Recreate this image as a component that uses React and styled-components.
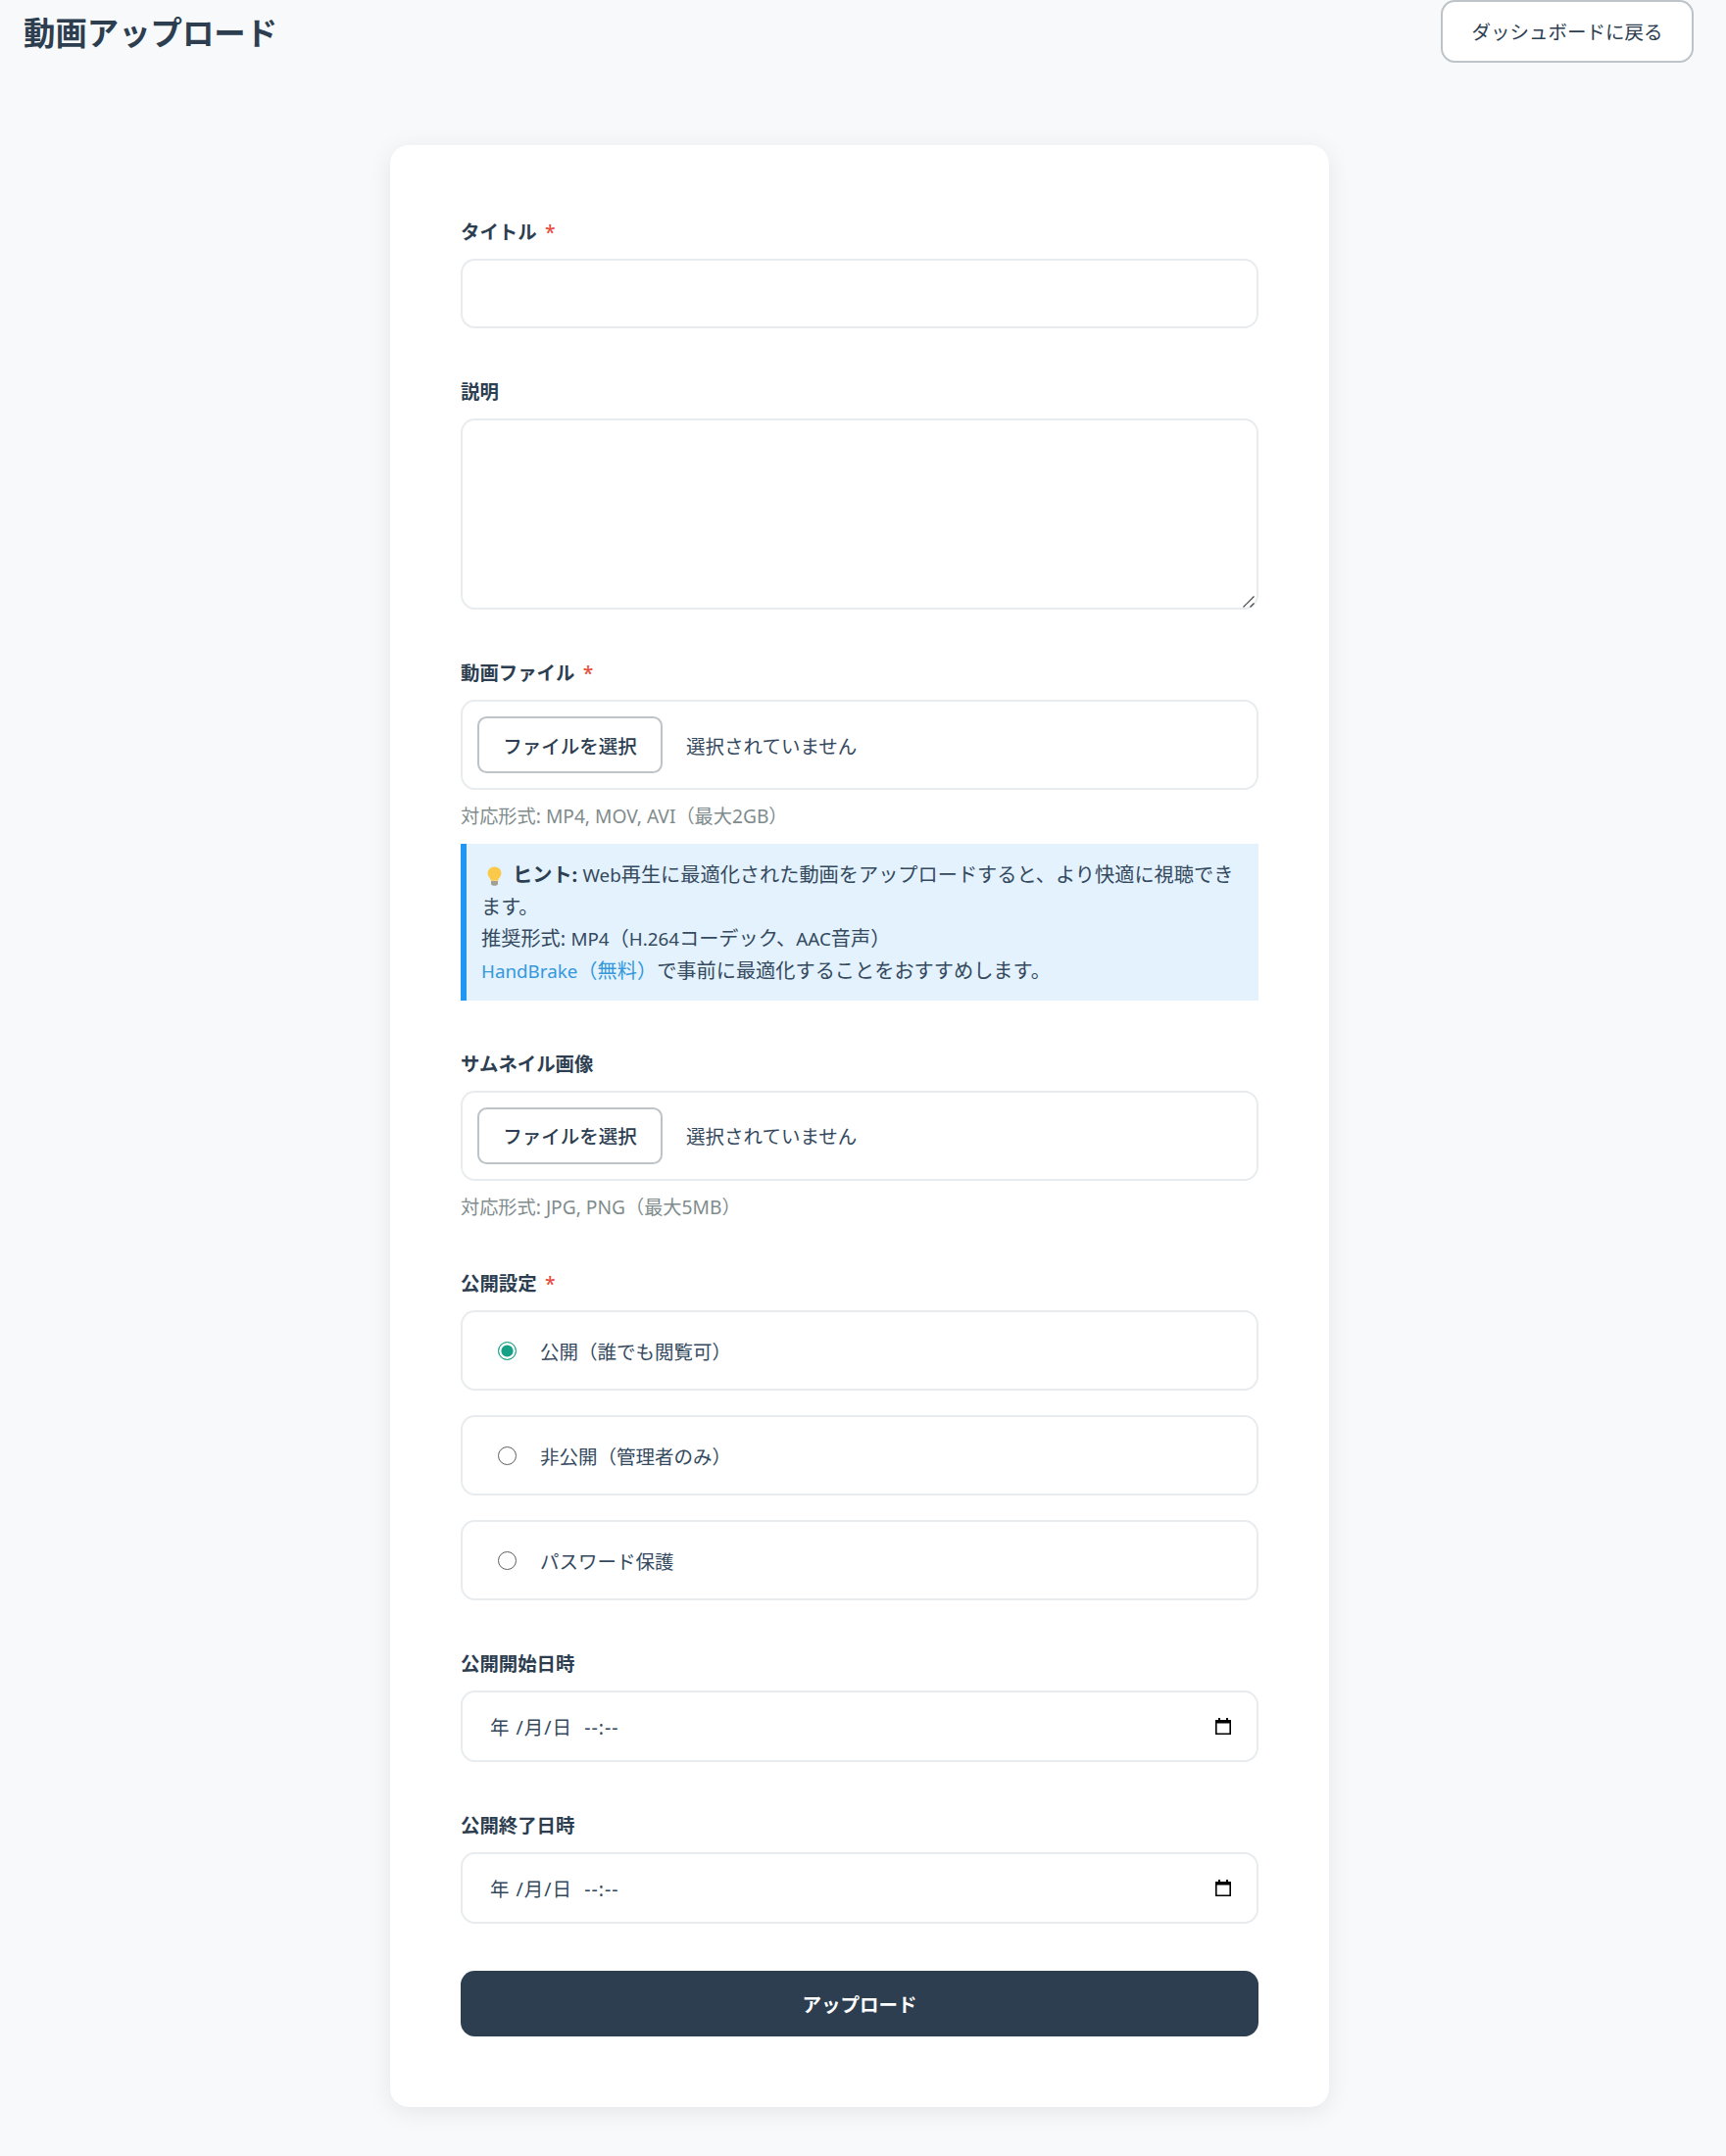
import React from "react";
import styled, { createGlobalStyle } from "styled-components";

const GlobalStyle = createGlobalStyle`
  html, body {
    margin: 0;
    padding: 0;
    background: #f8f9fa;
  }
  body {
    font-family: "Noto Sans", "Noto Sans CJK JP", sans-serif;
    color: #2c3e50;
  }
  * {
    box-sizing: border-box;
  }
`;

const Page = styled.div`
  width: 1754px;
  min-height: 2200px;
  background: #f8f9fa;
`;

const Header = styled.header`
  display: flex;
  justify-content: space-between;
  align-items: center;
  height: 63px;
  padding: 0 26px 0 24px;
  margin-bottom: 85px;
`;

const Title = styled.h1`
  margin: 3px 0 0;
  font-size: 32.4px;
  font-weight: 700;
  line-height: 1.2;
  color: #2c3e50;
`;

const BackButton = styled.a`
  display: flex;
  align-items: center;
  justify-content: center;
  width: 258px;
  height: 64px;
  background: #fff;
  border: 2.4px solid #bdc3c7;
  border-radius: 14.4px;
  font-size: 19.5px;
  color: #2c3e50;
`;

const Card = styled.form`
  width: 958px;
  margin: 0 auto;
  padding: 72px;
  background: #fff;
  border-radius: 19.2px;
  box-shadow: 0 4.8px 24px rgba(0, 0, 0, 0.08);
`;

const Field = styled.div`
  margin-bottom: 48px;
`;

const Label = styled.label`
  display: block;
  padding-top: 1px;
  margin-bottom: 11px;
  font-size: 19.4px;
  line-height: 32px;
  font-weight: 600;
  color: #2c3e50;
`;

const Required = styled.span`
  margin-left: 3.4px;
  font-weight: 500;
  color: #e74c3c;
`;

const TextInput = styled.input`
  display: block;
  width: 100%;
  height: 71px;
  padding: 0 24px;
  background: #fff;
  border: 2.4px solid #e9ecef;
  border-radius: 14.4px;
  font: inherit;
  font-size: 19.2px;
  outline: none;
`;

const TextAreaWrap = styled.div`
  position: relative;
`;

const TextArea = styled.textarea`
  display: block;
  width: 100%;
  height: 195px;
  padding: 18px 24px;
  background: #fff;
  border: 2.4px solid #e9ecef;
  border-radius: 14.4px;
  font: inherit;
  font-size: 19.2px;
  outline: none;
  resize: none;
`;

const Grip = styled.svg`
  position: absolute;
  right: 4px;
  bottom: 2px;
  width: 12px;
  height: 12px;
`;

const FileBox = styled.div`
  display: flex;
  align-items: center;
  height: 92px;
  padding: 0 15px;
  background: #fff;
  border: 2.4px solid #e9ecef;
  border-radius: 14.4px;
`;

const FileButton = styled.button`
  width: 189px;
  height: 58px;
  margin-right: 24px;
  background: #fff;
  border: 2.4px solid #bdc3c7;
  border-radius: 9.6px;
  font: inherit;
  font-size: 19.5px;
  font-weight: 500;
  color: #2c3e50;
`;

const FileName = styled.span`
  font-size: 19.5px;
  color: #34495e;
`;

const Hint = styled.p`
  margin: 13px 0 0;
  font-size: 19.2px;
  line-height: 27px;
  color: #7f8c8d;
`;

const TipBox = styled.div`
  margin-top: 15px;
  padding: 15px 19.2px 14.4px 15px;
  background: #e3f2fd;
  border-left: 6px solid #2196f3;
  font-size: 20.2px;
  line-height: 32.6px;
  color: #34495e;

  strong {
    color: #2c3e50;
    font-weight: 700;
  }
  a {
    color: #3498db;
    text-decoration: none;
  }
`;

// latin runs sit a little smaller than the kana around them in the reference
const Latin = styled.span`
  font-size: 18.8px;
  line-height: 1;
`;

const Bulb = styled.svg`
  width: 19px;
  height: 20px;
  margin: 0 9px 0 4px;
  vertical-align: -4px;
`;

const RadioGroup = styled.div`
  display: flex;
  flex-direction: column;
  gap: 24.4px;
`;

const RadioCard = styled.label`
  display: flex;
  align-items: center;
  height: 82.6px;
  padding: 0 36px;
  background: #fff;
  border: 2.4px solid #e9ecef;
  border-radius: 14.4px;
  font-size: 19.5px;
  color: #34495e;
`;

const Radio = styled.input`
  appearance: none;
  flex: none;
  width: 19px;
  height: 19px;
  margin: 0 24px 0 0;
  background: #fff;
  border: 1.8px solid #5f5f5f;
  border-radius: 50%;

  &:checked {
    background: #16a085;
    border-color: #16a085;
    box-shadow: inset 0 0 0 2.4px #fff;
  }
`;

const DateBox = styled.div`
  display: flex;
  align-items: center;
  justify-content: space-between;
  height: 73px;
  padding: 0 26px 0 28px;
  background: #fff;
  border: 2.4px solid #e9ecef;
  border-radius: 14.4px;
`;

const DateText = styled.span`
  font-size: 19.5px;
  letter-spacing: 1px;
  color: #34495e;
  white-space: pre;
`;

const CalendarIcon = styled.svg`
  display: block;
  width: 16px;
  height: 17px;
`;

const SubmitButton = styled.button`
  display: block;
  width: 100%;
  height: 67px;
  margin-top: 1px;
  background: #2c3e50;
  border: none;
  border-radius: 14.4px;
  font: inherit;
  font-size: 19.5px;
  font-weight: 700;
  color: #fff;
`;

function Calendar() {
  return (
    <CalendarIcon viewBox="0 0 16 17">
      <path d="M3 0h2v2h6V0h2v2h3v15H0V2h3z" fill="#000" />
      <rect x="1.6" y="5.5" width="12.8" height="10" fill="#fff" />
    </CalendarIcon>
  );
}

function BulbIcon() {
  return (
    <Bulb viewBox="0 0 19 20">
      <path d="M9.5 0.5C5.4 0.5 2.6 3.5 2.6 7c0 2.6 1.5 4 2.5 5.6.5.8.6 1.4.7 2.2h7.4c.1-.8.2-1.4.7-2.2 1-1.6 2.5-3 2.5-5.6 0-3.5-2.8-6.5-6.9-6.5z" fill="#fbc94a" />
      <path d="M6 15h7v3.2c0 .8-1.6 1.6-3.5 1.6S6 19 6 18.2z" fill="#a39e93" />
    </Bulb>
  );
}

function FileField({ label, required, hint, children }) {
  return (
    <Field>
      <Label>
        {label}
        {required && <Required> *</Required>}
      </Label>
      <FileBox>
        <FileButton type="button">ファイルを選択</FileButton>
        <FileName>選択されていません</FileName>
      </FileBox>
      <Hint>{hint}</Hint>
      {children}
    </Field>
  );
}

function DateField({ label }) {
  return (
    <Field>
      <Label>{label}</Label>
      <DateBox>
        <DateText>年 /月/日  --:--</DateText>
        <Calendar />
      </DateBox>
    </Field>
  );
}

export default function App() {
  return (
    <Page>
      <GlobalStyle />
      <Header>
        <Title>動画アップロード</Title>
        <BackButton>ダッシュボードに戻る</BackButton>
      </Header>
      <Card>
        <Field>
          <Label>
            タイトル<Required> *</Required>
          </Label>
          <TextInput type="text" />
        </Field>
        <Field>
          <Label>説明</Label>
          <TextAreaWrap>
            <TextArea />
            <Grip viewBox="0 0 12 12">
              <path d="M0.5 11.5L11.5 0.5M7.5 11.5L11.5 7.5" stroke="#444" strokeWidth="1.2" fill="none" />
            </Grip>
          </TextAreaWrap>
        </Field>
        <FileField label="動画ファイル" required hint="対応形式: MP4, MOV, AVI（最大2GB）">
          <TipBox>
            <BulbIcon />
            <strong>ヒント:</strong> <Latin>Web</Latin>再生に最適化された動画をアップロードすると、より快適に視聴できます。
            <br />
            推奨形式: <Latin>MP4</Latin>（<Latin>H.264</Latin>コーデック、<Latin>AAC</Latin>音声）
            <br />
            <a href="#handbrake"><Latin>HandBrake</Latin>（無料）</a>で事前に最適化することをおすすめします。
          </TipBox>
        </FileField>
        <FileField label="サムネイル画像" hint="対応形式: JPG, PNG（最大5MB）" />
        <Field>
          <Label>
            公開設定<Required> *</Required>
          </Label>
          <RadioGroup>
            <RadioCard>
              <Radio type="radio" name="visibility" defaultChecked />
              公開（誰でも閲覧可）
            </RadioCard>
            <RadioCard>
              <Radio type="radio" name="visibility" />
              非公開（管理者のみ）
            </RadioCard>
            <RadioCard>
              <Radio type="radio" name="visibility" />
              パスワード保護
            </RadioCard>
          </RadioGroup>
        </Field>
        <DateField label="公開開始日時" />
        <DateField label="公開終了日時" />
        <SubmitButton type="button">アップロード</SubmitButton>
      </Card>
    </Page>
  );
}
